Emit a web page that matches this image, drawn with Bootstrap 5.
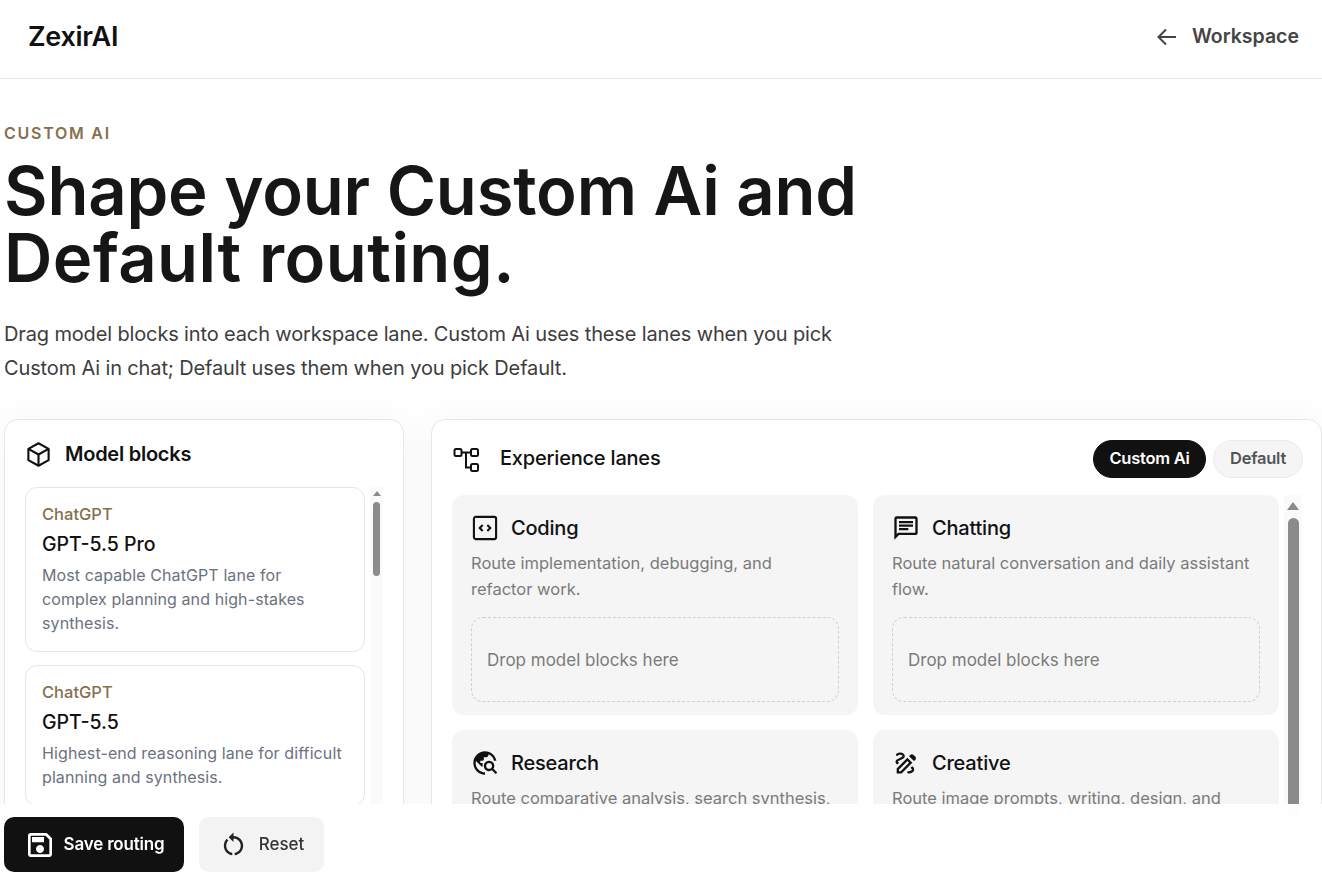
<!DOCTYPE html>
<html lang="en">
<head>
<meta charset="utf-8">
<title>ZexirAI Custom AI</title>
<link href="https://cdn.jsdelivr.net/npm/bootstrap@5.3.0/dist/css/bootstrap.min.css" rel="stylesheet">
<style>
html,body{height:876px;overflow:hidden;background:#fff}
body{font-family:Inter,"Open Sans",sans-serif;color:#111}
svg{display:block;flex:none}
.topbar{height:79px;padding:0 23px 4px 28px;border-bottom:1px solid #e5e5e5}
.brand{font-size:27px;font-weight:600;letter-spacing:-.3px;color:#111}
.back{font-size:19.5px;font-weight:600;color:#444;letter-spacing:0;gap:13px;text-decoration:none}
.page{padding:44px 0 0 4px}
.eyebrow{font-size:16px;line-height:20px;font-weight:600;letter-spacing:1.75px;color:#87704d}
.hero{font-size:67px;line-height:67px;font-weight:600;letter-spacing:-.2px;color:#161616;margin:14px 0 26px}
.hero-line{display:block}
.hero-second{letter-spacing:.45px}
.lead-text{font-size:20px;line-height:34px;color:#3d3d3d;letter-spacing:-.14px;width:860px;margin-bottom:34px}
.panels{display:grid;grid-template-columns:400px 1fr;gap:27px}
.panel{background:#fff;border:1px solid #e7e7e7;border-radius:14px;box-shadow:0 0 40px rgba(0,0,0,.045);height:457px;overflow:hidden}
.panel-left{padding:19px 20px 0}
.panel-right{padding:20px 19px 0 20px}
.panel-title{font-size:20px;line-height:30px;font-weight:600;letter-spacing:-.25px;gap:13px;margin-bottom:18px}
.block-list{gap:13px;width:340px}
.block{border:1px solid #e5e5e5;border-radius:12px;padding:14px 19px 16px 16px;background:#fff}
.block-vendor{font-size:16.5px;line-height:24px;font-weight:500;color:#87704d}
.block-name{font-size:19.5px;line-height:32px;font-weight:500;color:#111;margin:2px 0 3px}
.block-desc{font-size:16px;line-height:24px;color:#6b7280;letter-spacing:.1px}
.track{background:#fafafa;align-items:center;flex:none}
.track-sm{width:13px;margin-left:5px}
.track-lg{width:18px;margin-left:5px}
.arrow{width:0;height:0;border-style:solid;border-color:transparent transparent #8a8a8a}
.track-sm .arrow{border-width:0 4px 5px;margin:4px 0 6px}
.track-lg .arrow{border-width:0 6px 8px;margin:7px 0 8px}
.thumb{background:#8b8b8b;border-radius:6px}
.track-sm .thumb{width:7px;height:74px}
.track-lg .thumb{width:11px;height:330px}
.lanes-head{margin:0 -1px 17px 0;height:38px}
.lanes-title{font-size:20px;font-weight:500;letter-spacing:-.2px;gap:20px;line-height:28px}
.lanes-title span{padding-bottom:2px}
.pills{gap:7px}
.pill{font-size:16.5px;font-weight:600;line-height:34px;height:38px;border-radius:19px;padding:0 0 2px;letter-spacing:-.25px}
.pill-on{background:#111;color:#fff;border:1px solid #111;width:113px}
.pill-off{background:#f5f5f5;color:#555;border:1px solid #ebebeb;width:90px}
.lanes{display:grid;grid-template-columns:repeat(2,406px);gap:15px;width:827px}
.lane{background:#f5f5f5;border-radius:12px;padding:18px 19px 13px;height:220px}
.lane-title{font-size:20px;line-height:30px;font-weight:500;letter-spacing:-.2px;gap:12px;color:#111}
.lane-desc{font-size:16.5px;line-height:26px;color:#7b7b7b;padding-right:6px;margin:7px 0 15px}
.drop{height:85px;border:1px dashed #cfcfcf;border-radius:12px;padding:2px 0 0 15px;font-size:17px;color:#7b7b7b}
.actions{position:fixed;left:0;right:0;top:804px;height:72px;background:rgba(255,255,255,.97);backdrop-filter:blur(12px);padding:13px 0 4px 4px;gap:15px}
.btn-save{background:#111;color:#fff;border:0;border-radius:10px;width:180px;height:55px;font-size:17px;font-weight:600;letter-spacing:-.2px;gap:8px;padding:0}
.btn-save:hover{background:#111;color:#fff}
.btn-reset{background:#f3f3f3;color:#333;border:0;border-radius:10px;width:125px;height:55px;font-size:17px;font-weight:500;letter-spacing:0;gap:11px;padding:0}
</style>
</head>
<body>
<header class="topbar d-flex align-items-center justify-content-between">
  <a class="brand text-decoration-none" href="#">ZexirAI</a>
  <a class="back d-flex align-items-center" href="#">
    <svg width="24" height="24" viewBox="0 0 24 24" fill="none" stroke="#444" stroke-width="2"><path d="M21 12H3.500M11 4.500 3.500 12l7.500 7.500"/></svg>
    Workspace
  </a>
</header>
<main class="page">
  <div class="eyebrow">CUSTOM AI</div>
  <h1 class="hero"><span class="hero-line">Shape your Custom Ai and</span><span class="hero-line hero-second">Default routing.</span></h1>
  <p class="lead-text">Drag model blocks into each workspace lane. Custom Ai uses these lanes when you pick Custom Ai in chat; Default uses them when you pick Default.</p>
  <div class="panels">
    <section class="panel panel-left">
      <div class="panel-title d-flex align-items-center">
        <svg width="27" height="27" viewBox="0 0 24 24" fill="none" stroke="#111" stroke-width="1.900" stroke-linejoin="round"><path d="M12 2 21 7v10l-9 5-9-5V7z"/><path d="M3 7l9 5 9-5M12 12v10"/></svg>
        Model blocks
      </div>
      <div class="d-flex">
        <div class="block-list d-flex flex-column">
          <article class="block">
            <div class="block-vendor">ChatGPT</div>
            <div class="block-name">GPT-5.5 Pro</div>
            <div class="block-desc">Most capable ChatGPT lane for complex planning and high-stakes synthesis.</div>
          </article>
          <article class="block">
            <div class="block-vendor">ChatGPT</div>
            <div class="block-name">GPT-5.5</div>
            <div class="block-desc">Highest-end reasoning lane for difficult planning and synthesis.</div>
          </article>
        </div>
        <div class="track track-sm d-flex flex-column">
          <div class="arrow"></div>
          <div class="thumb"></div>
        </div>
      </div>
    </section>
    <section class="panel panel-right">
      <div class="lanes-head d-flex align-items-center justify-content-between">
        <div class="lanes-title d-flex align-items-center">
          <svg width="28" height="28" viewBox="0 0 28 28" fill="none" stroke="#111" stroke-width="2"><rect x="2.500" y="4" width="7" height="7" rx="1.500"/><rect x="19" y="4" width="7" height="7" rx="1.500"/><rect x="19" y="19" width="7" height="7" rx="1.500"/><path d="M9.500 7.500H19M14 7.500V22.500H19"/></svg>
          <span>Experience lanes</span>
        </div>
        <div class="pills d-flex">
          <button class="btn pill pill-on" type="button">Custom Ai</button>
          <button class="btn pill pill-off" type="button">Default</button>
        </div>
      </div>
      <div class="d-flex">
        <div class="lanes">
          <article class="lane">
            <div class="lane-title d-flex align-items-center">
              <svg width="28" height="28" viewBox="0 0 24 24" fill="none" stroke="#111" stroke-width="1.800"><rect x="2.500" y="2.500" width="19" height="19" rx="1.500"/><path d="M10 9.500 7.500 12l2.500 2.500M14 9.500l2.500 2.500-2.500 2.500"/></svg>
              Coding
            </div>
            <div class="lane-desc">Route implementation, debugging, and refactor work.</div>
            <div class="drop d-flex align-items-center">Drop model blocks here</div>
          </article>
          <article class="lane">
            <div class="lane-title d-flex align-items-center">
              <svg width="28" height="28" viewBox="0 0 24 24" fill="#111"><path d="M20 2H4c-1.100 0-2 .9-2 2v18l4-4h14c1.100 0 2-.9 2-2V4c0-1.100-.9-2-2-2zm0 14H5.170L4 17.170V4h16v12zM6 12h8v2H6zm0-3h12v2H6zm0-3h12v2H6z"/></svg>
              Chatting
            </div>
            <div class="lane-desc">Route natural conversation and daily assistant flow.</div>
            <div class="drop d-flex align-items-center">Drop model blocks here</div>
          </article>
          <article class="lane">
            <div class="lane-title d-flex align-items-center">
              <svg width="28" height="28" viewBox="0 0 24 24" fill="#111"><path d="M19.300 16.900c.4-.7.7-1.500.7-2.400 0-2.500-2-4.500-4.500-4.500S11 12 11 14.500s2 4.500 4.500 4.500c.9 0 1.700-.3 2.400-.7l3.200 3.200 1.400-1.400-3.200-3.200zm-3.800.1c-1.400 0-2.500-1.100-2.500-2.500s1.100-2.500 2.500-2.500 2.500 1.100 2.500 2.500-1.100 2.500-2.500 2.500zM12 20v2C6.480 22 2 17.520 2 12S6.480 2 12 2c4.840 0 8.870 3.440 9.800 8h-2.070c-.64-2.460-2.400-4.470-4.730-5.410V5c0 1.100-.9 2-2 2h-2v2c0 .55-.45 1-1 1H8v2h2v3H9l-4.790-4.790C4.080 10.790 4 11.380 4 12c0 4.410 3.590 8 8 8z"/></svg>
              Research
            </div>
            <div class="lane-desc">Route comparative analysis, search synthesis, and source review.</div>
            <div class="drop"></div>
          </article>
          <article class="lane">
            <div class="lane-title d-flex align-items-center">
              <svg width="28" height="28" viewBox="0 0 24 24" fill="#111" fill-rule="evenodd"><path d="M18.850 10.390l1.060-1.060c.78-.78.78-2.050 0-2.830L18.500 5.090c-.78-.78-2.050-.78-2.830 0l-1.060 1.060 4.240 4.240zM13.190 7.560 4 16.760V21h4.240l9.190-9.190-4.240-4.250zM7.410 19H6v-1.410l7.190-7.200 1.410 1.420-7.190 7.190zM19 17.500c0 2.190-2.540 3.500-5 3.500-.55 0-1-.45-1-1s.45-1 1-1c1.540 0 3-.73 3-1.500 0-.47-.48-.87-1.230-1.200l1.480-1.480c1.070.63 1.750 1.470 1.750 2.680zM4.580 13.350C3.610 12.790 3 12.060 3 11c0-1.800 1.890-2.630 3.560-3.360C7.590 7.180 9 6.560 9 6c0-.41-.78-1-2-1-1.260 0-1.800.61-1.830.64-.35.41-.98.46-1.400.12-.41-.34-.49-.95-.15-1.380C3.730 4.240 4.760 3 7 3s4 1.320 4 3c0 1.870-1.930 2.720-3.640 3.470C6.420 9.880 5 10.500 5 11c0 .31.43.6 1.070.86l-1.490 1.490z"/></svg>
              Creative
            </div>
            <div class="lane-desc">Route image prompts, writing, design, and media work.</div>
            <div class="drop"></div>
          </article>
        </div>
        <div class="track track-lg d-flex flex-column">
          <div class="arrow"></div>
          <div class="thumb"></div>
        </div>
      </div>
    </section>
  </div>
</main>
<footer class="actions d-flex align-items-start">
  <button class="btn btn-save d-flex align-items-center justify-content-center" type="button">
    <svg width="32" height="32" viewBox="0 0 24 24" fill="#fff"><path d="M17 3H5c-1.110 0-2 .9-2 2v14c0 1.100.89 2 2 2h14c1.100 0 2-.9 2-2V7l-4-4zm2 16H5V5h11.170L19 7.830V19zm-7-7c-1.660 0-3 1.340-3 3s1.340 3 3 3 3-1.340 3-3-1.340-3-3-3zM6 6h9v4H6z"/></svg>
    Save routing
  </button>
  <button class="btn btn-reset d-flex align-items-center justify-content-center" type="button">
    <svg width="29" height="29" viewBox="0 0 24 24" fill="#222"><path d="M12 5V2L8 6l4 4V7c3.310 0 6 2.690 6 6 0 2.970-2.160 5.430-5 5.910v2.020c3.950-.49 7-3.850 7-7.930 0-4.420-3.580-8-8-8zm-6 8c0-1.650.67-3.150 1.760-4.240L6.340 7.340C4.900 8.790 4 10.790 4 13c0 4.080 3.050 7.440 7 7.930v-2.020c-2.840-.48-5-2.940-5-5.910z"/></svg>
    Reset
  </button>
</footer>
<script src="https://cdn.jsdelivr.net/npm/bootstrap@5.3.0/dist/js/bootstrap.bundle.min.js"></script>
</body>
</html>
